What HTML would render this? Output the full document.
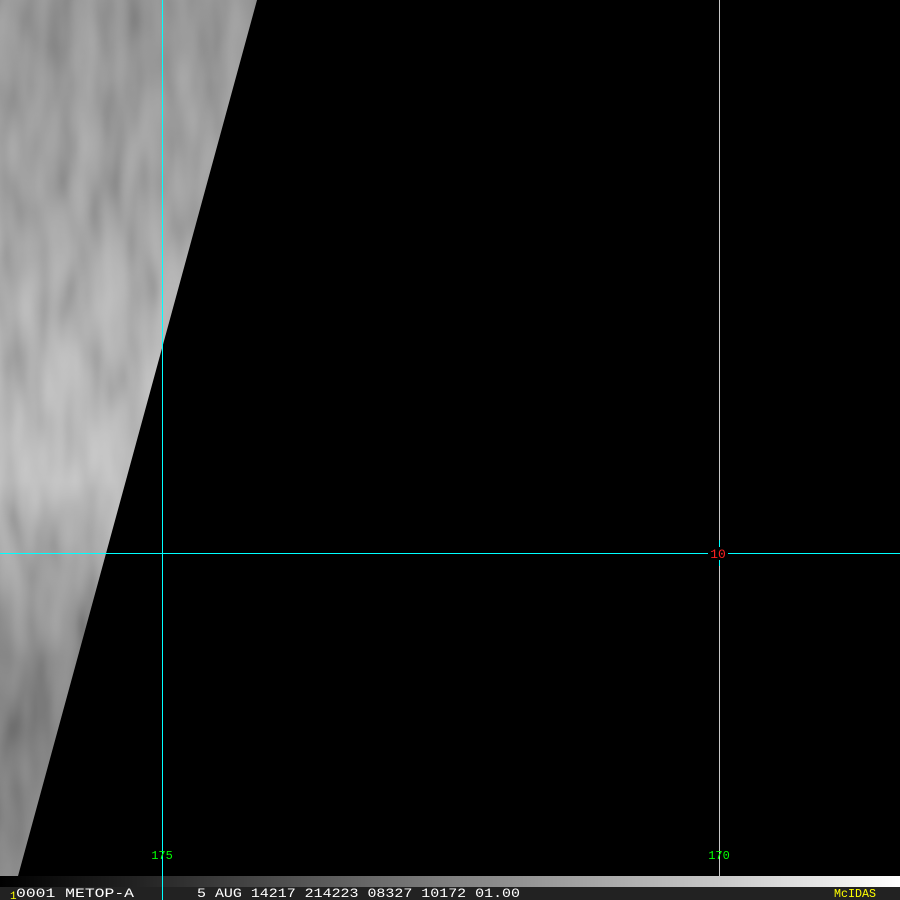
<!DOCTYPE html>
<html><head><style>
html,body{margin:0;padding:0;background:#000;width:900px;height:900px;overflow:hidden}
svg{display:block}
text{font-family:"Liberation Mono",monospace}
</style></head><body>
<svg width="900" height="900" viewBox="0 0 900 900" xmlns="http://www.w3.org/2000/svg" shape-rendering="crispEdges">
<defs>
<linearGradient id="sw" x1="0" y1="0" x2="0" y2="1">
<stop offset="0" stop-color="#8a8a8a"/>
<stop offset="0.2" stop-color="#999"/>
<stop offset="0.4" stop-color="#b2b2b2"/>
<stop offset="0.55" stop-color="#c0c0c0"/>
<stop offset="0.63" stop-color="#a5a5a5"/>
<stop offset="0.75" stop-color="#7a7a7a"/>
<stop offset="0.9" stop-color="#6e6e6e"/>
<stop offset="1" stop-color="#777"/>
</linearGradient>
<linearGradient id="bar" x1="0" y1="0" x2="1" y2="0">
<stop offset="0" stop-color="#000"/>
<stop offset="0.15" stop-color="#222"/>
<stop offset="0.5" stop-color="#808080"/>
<stop offset="0.8" stop-color="#c8c8c8"/>
<stop offset="1" stop-color="#fff"/>
</linearGradient>
<filter id="tex"><feTurbulence type="fractalNoise" baseFrequency="0.04 0.012" numOctaves="2" seed="4"/><feColorMatrix type="matrix" values="1.2 0 0 0 -0.1 1.2 0 0 0 -0.1 1.2 0 0 0 -0.1 0 0 0 0 0.25" /></filter>
<clipPath id="cp"><polygon points="0,0 257,0 18,876 0,876"/></clipPath>
</defs>
<polygon points="0,0 257,0 18,876 0,876" fill="url(#sw)" shape-rendering="auto"/>
<g clip-path="url(#cp)"><rect x="0" y="0" width="260" height="876" filter="url(#tex)"/></g>
<rect x="719" y="0" width="1" height="887" fill="#c8c8c8"/>
<rect x="719" y="540" width="1" height="26" fill="#00ffff"/>
<rect x="0" y="553" width="900" height="1" fill="#00ffff"/>
<rect x="162" y="0" width="1" height="900" fill="#00ffff"/>
<rect x="708" y="547" width="20" height="13" fill="#000"/>
<text x="718" y="558" fill="#ff2020" font-size="13" text-anchor="middle">10</text>
<text x="162" y="859" fill="#00ff00" font-size="12" text-anchor="middle">175</text>
<text x="719" y="859" fill="#00ff00" font-size="12" text-anchor="middle">170</text>
<rect x="0" y="876" width="900" height="11" fill="url(#bar)"/>
<rect x="162" y="876" width="1" height="24" fill="#00ffff"/>
<rect x="0" y="887" width="900" height="13" fill="#222"/>
<rect x="162" y="887" width="1" height="13" fill="#00ffff"/>
<text x="10" y="899" fill="#ffff00" font-size="11">1</text>
<text x="16" y="897" fill="#fff" font-size="13" textLength="118" lengthAdjust="spacingAndGlyphs">0001 METOP-A</text>
<text x="197" y="897" fill="#fff" font-size="13" textLength="323" lengthAdjust="spacingAndGlyphs">5 AUG 14217 214223 08327 10172 01.00</text>
<text x="834" y="897" fill="#ffff00" font-size="12" textLength="42" lengthAdjust="spacingAndGlyphs">McIDAS</text>
</svg>
</body></html>
